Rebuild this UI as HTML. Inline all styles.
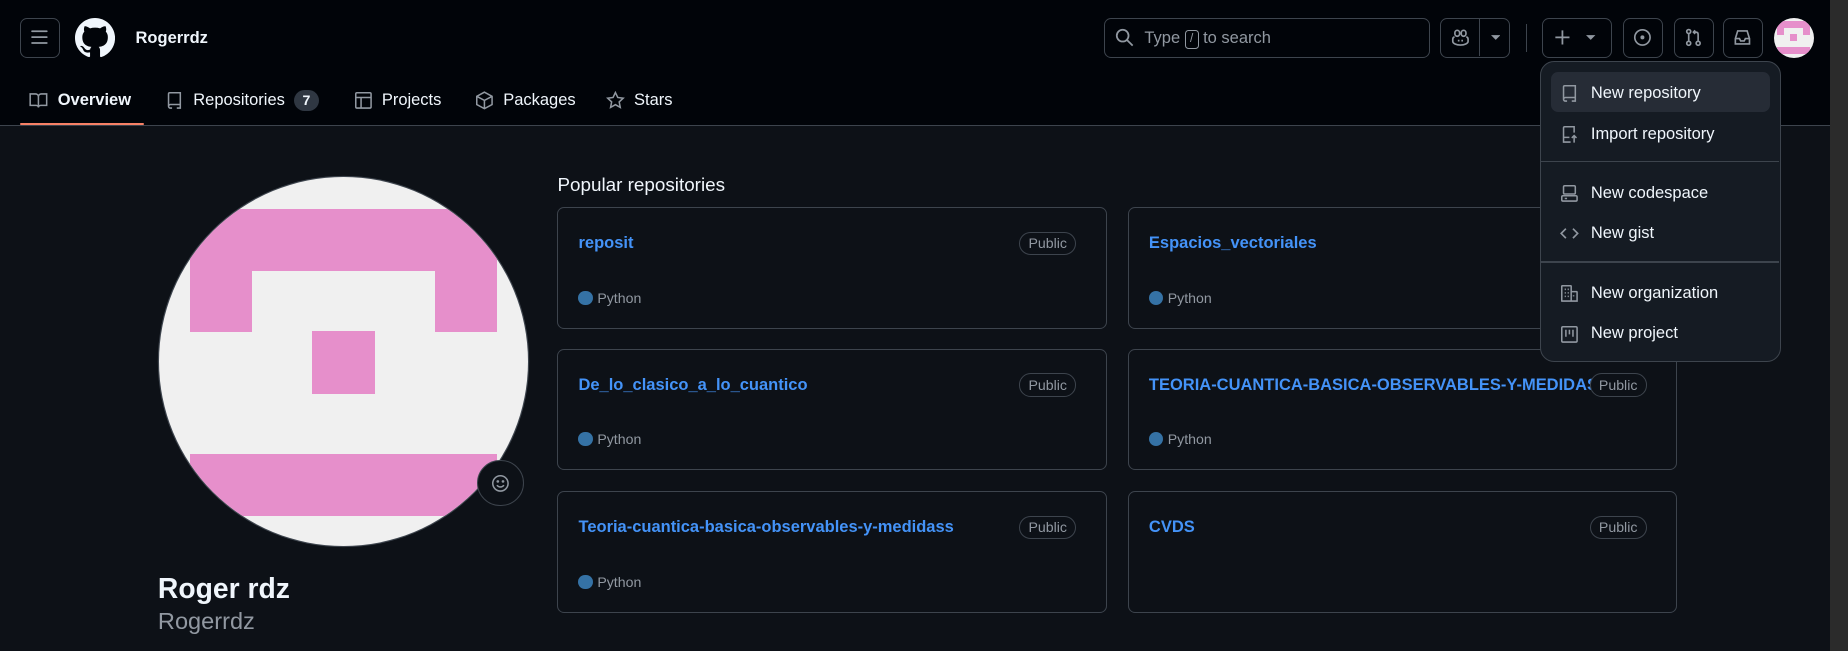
<!DOCTYPE html>
<html><head><meta charset="utf-8"><style>
html,body{margin:0;padding:0;}
body{width:1568px;height:552px;zoom:1.17857;background:#0d1117;font-family:"Liberation Sans",sans-serif;color:#f0f6fc;position:relative;overflow:hidden;}
.a{position:absolute;}
.hdr{left:0;top:0;width:1553px;height:106px;background:#010409;border-bottom:1px solid #3d444d;}
.btn{position:absolute;border:1px solid #3d444d;border-radius:6px;box-sizing:border-box;}
svg{display:block}
.tab{position:absolute;top:75px;height:20px;font-size:14px;color:#f0f6fc;display:flex;align-items:center;gap:8px;}
.card{position:absolute;width:466px;height:103px;border:1px solid #3d444d;border-radius:6px;box-sizing:border-box;}
.rn{position:absolute;left:17px;top:22px;font-size:14px;font-weight:bold;color:#4493f8;}
.pub{position:absolute;right:25px;top:20px;border:1px solid #3d444d;border-radius:10px;font-size:12px;color:#9198a1;padding:2px 7px;line-height:14px;}
.lang{position:absolute;left:17px;top:69px;font-size:12px;color:#9198a1;display:flex;align-items:center;gap:4px;}
.dot{width:12px;height:12px;border-radius:50%;background:#3572a5;}
.menu{left:1307px;top:52px;width:204px;height:255px;background:#151b23;border:1px solid #3d444d;border-radius:12px;box-sizing:border-box;}
.mi{position:absolute;left:8px;width:186px;height:34px;display:flex;align-items:center;font-size:14px;color:#f0f6fc;border-radius:6px;padding-top:3px;box-sizing:border-box;}
.mi svg{margin-left:8px;margin-right:10px}
.div{position:absolute;left:0;width:202px;height:1px;background:#3d444d;}
</style></head><body>
<div class="a hdr"></div>
<div class="a" style="left:1553px;top:0;width:15px;height:552px;background:#2b2b2b"></div>
<div class="btn" style="left:17px;top:15px;width:34px;height:34px;"><svg style="margin:8px" width="16" height="16" viewBox="0 0 16 16" fill="#9198a1"><path d="M1 2.75A.75.75 0 0 1 1.75 2h12.5a.75.75 0 0 1 0 1.5H1.75A.75.75 0 0 1 1 2.75Zm0 5A.75.75 0 0 1 1.75 7h12.5a.75.75 0 0 1 0 1.5H1.75A.75.75 0 0 1 1 7.75ZM1.75 12h12.5a.75.75 0 0 1 0 1.5H1.75a.75.75 0 0 1 0-1.5Z"/></svg></div>
<svg class="a" style="left:64px;top:15px" width="34" height="34" viewBox="0 0 16 16" fill="#f0f6fc"><path d="M8 0C3.58 0 0 3.58 0 8c0 3.540 2.29 6.53 5.47 7.59.4.07.55-.17.55-.38 0-.19-.01-.82-.01-1.49-2.01.37-2.530-.49-2.69-.94-.09-.23-.48-.94-.82-1.13-.28-.15-.68-.52-.01-.53.63-.01 1.08.58 1.23.82.72 1.21 1.87.87 2.33.66.07-.52.28-.87.51-1.070-1.78-.2-3.64-.89-3.640-3.95 0-.87.31-1.59.82-2.15-.08-.2-.36-1.02.08-2.12 0 0 .67-.21 2.2.82.64-.18 1.32-.27 2-.27.68 0 1.36.09 2 .27 1.53-1.04 2.2-.82 2.2-.82.44 1.1.16 1.92.08 2.12.51.56.82 1.27.82 2.15 0 3.07-1.870 3.75-3.65 3.95.29.25.54.73.54 1.48 0 1.07-.01 1.93-.01 2.2 0 .21.15.46.55.38A8.013 8.013 0 0 0 16 8c0-4.42-3.58-8-8-8z"/></svg>
<div class="a" style="left:115px;top:25px;font-size:14px;font-weight:bold">Rogerrdz</div>

<div class="btn" style="left:937px;top:15px;width:276px;height:34px;"></div>
<svg class="a" style="left:946px;top:24px" width="16" height="16" viewBox="0 0 16 16" fill="none" stroke="#9198a1" stroke-width="1.5"><circle cx="6.5" cy="6.5" r="5"/><path d="M10.3 10.3 15 15"/></svg>
<div class="a" style="left:971px;top:25px;font-size:14px;color:#9198a1">Type <span style="display:inline-block;border:1px solid #9198a1;border-radius:3px;font-size:10px;width:10px;height:14px;text-align:center;line-height:14px;vertical-align:1px">/</span> to search</div>
<div class="btn" style="left:1222px;top:15px;width:59px;height:34px;"><div class="a" style="left:32px;top:0;width:1px;height:32px;background:#3d444d"></div></div>
<svg class="a" style="left:1231px;top:24px" width="16" height="16" viewBox="0 0 16 16" fill="none" stroke="#9198a1" stroke-width="1.4"><path d="M3 7.5c-1 .3-1.5 1-1.5 2v2c0 1.5 3 3 6.5 3s6.5-1.5 6.5-3v-2c0-1-.5-1.7-1.5-2"/><rect x="3.3" y="2" width="4" height="5" rx="2"/><rect x="8.7" y="2" width="4" height="5" rx="2"/><path d="M6.5 10v1.5M9.5 10v1.5"/></svg>
<svg class="a" style="left:1265px;top:29px" width="8" height="6" viewBox="0 0 8 6" fill="#9198a1"><path d="M0 1h8L4 5z"/></svg>
<div class="a" style="left:1295px;top:20px;width:1px;height:24px;background:#3d444d"></div>
<div class="btn" style="left:1308px;top:15px;width:60px;height:34px;"></div>
<svg class="a" style="left:1318px;top:24px" width="16" height="16" viewBox="0 0 16 16" stroke="#9198a1" stroke-width="1.5"><path d="M8 2v12M2 8h12"/></svg>
<svg class="a" style="left:1346px;top:29px" width="8" height="6" viewBox="0 0 8 6" fill="#9198a1"><path d="M0 1h8L4 5z"/></svg>
<div class="btn" style="left:1377px;top:15px;width:34px;height:34px;"><svg style="margin:8px" width="16" height="16" viewBox="0 0 16 16" fill="none" stroke="#9198a1" stroke-width="1.4"><circle cx="8" cy="8" r="6.5"/><circle cx="8" cy="8" r="1" fill="#9198a1"/></svg></div>
<div class="btn" style="left:1420px;top:15px;width:34px;height:34px;"><svg style="margin:8px" width="16" height="16" viewBox="0 0 16 16" fill="none" stroke="#9198a1" stroke-width="1.4"><circle cx="4" cy="3" r="1.7"/><circle cx="4" cy="13" r="1.7"/><circle cx="12" cy="13" r="1.7"/><path d="M4 5v6M12 11V5.5c0-1-.5-2-2-2H8M9.5 2 8 3.5 9.5 5"/></svg></div>
<div class="btn" style="left:1462px;top:15px;width:34px;height:34px;"><svg style="margin:8px" width="16" height="16" viewBox="0 0 16 16" fill="none" stroke="#9198a1" stroke-width="1.4"><path d="M2 9l2-6.5h8L14 9v4.5H2z M2 9h3.5l1 2h3l1-2H14"/></svg></div>
<div class="a" style="left:1505px;top:15px;width:34px;height:34px;border-radius:50%;background:#f0f0f0;overflow:hidden">
<div class="a" style="left:3px;top:3px;width:28px;height:6px;background:#e68fcb"></div>
<div class="a" style="left:3px;top:9px;width:6px;height:6px;background:#e68fcb"></div>
<div class="a" style="left:25px;top:9px;width:6px;height:6px;background:#e68fcb"></div>
<div class="a" style="left:14px;top:14px;width:6px;height:6px;background:#e68fcb"></div>
<div class="a" style="left:3px;top:25px;width:28px;height:6px;background:#e68fcb"></div></div>

<div class="tab" style="left:25px"><svg width="16" height="16" viewBox="0 0 16 16" fill="none" stroke="#9198a1" stroke-width="1.3"><path d="M1 2.5h4.5C7 2.5 8 3.5 8 5v9c0-1-.8-1.8-2-1.8H1zM15 2.5h-4.5C9 2.5 8 3.5 8 5v9c0-1 .8-1.8 2-1.8h5z"/></svg><b>Overview</b></div>
<div class="a" style="left:17px;top:104px;width:105px;height:2px;background:#f78166;border-radius:2px"></div>
<div class="tab" style="left:140px"><svg width="16" height="16" viewBox="0 0 16 16" fill="none" stroke="#9198a1" stroke-width="1.3"><path d="M3 13V2.5c0-.6.4-1 1-1h9v10H4.5C3.7 11.5 3 12.2 3 13s.7 1.5 1.5 1.5H6M10 14.5h3v-3"/></svg>Repositories <span style="background:#2f3742;border-radius:10px;font-size:12px;font-weight:bold;padding:0 7px;line-height:18px">7</span></div>
<div class="tab" style="left:300px"><svg width="16" height="16" viewBox="0 0 16 16" fill="none" stroke="#9198a1" stroke-width="1.3"><rect x="1.5" y="1.5" width="13" height="13" rx="1"/><path d="M1.5 5.5h13M6 5.5v9"/></svg>Projects</div>
<div class="tab" style="left:403px"><svg width="16" height="16" viewBox="0 0 16 16" fill="none" stroke="#9198a1" stroke-width="1.3"><path d="M8 1 14.5 4.5v7L8 15 1.5 11.5v-7zM1.5 4.5 8 8l6.5-3.5M8 8v7"/></svg>Packages</div>
<div class="tab" style="left:514px"><svg width="16" height="16" viewBox="0 0 16 16" fill="none" stroke="#9198a1" stroke-width="1.3"><path d="M8 1.3l2 4.2 4.6.6-3.4 3.2.9 4.6L8 11.6l-4.1 2.3.9-4.6L1.4 6.1 6 5.5z"/></svg>Stars</div>

<div class="a" style="left:135px;top:150px;width:313px;height:313px;border-radius:50%;background:#f0f0f0;overflow:hidden;box-shadow:0 0 0 1px #3d444d">
<div class="a" style="left:26px;top:27px;width:261px;height:53px;background:#e68fcb"></div>
<div class="a" style="left:26px;top:80px;width:53px;height:52px;background:#e68fcb"></div>
<div class="a" style="left:234px;top:80px;width:53px;height:52px;background:#e68fcb"></div>
<div class="a" style="left:130px;top:131px;width:53px;height:53px;background:#e68fcb"></div>
<div class="a" style="left:26px;top:235px;width:261px;height:53px;background:#e68fcb"></div></div>
<div class="a" style="left:405px;top:390px;width:38px;height:38px;border-radius:50%;background:#0d1117;border:1px solid #3d444d"><svg style="margin:11px" width="16" height="16" viewBox="0 0 16 16" fill="none" stroke="#9198a1" stroke-width="1.3"><circle cx="8" cy="8" r="6.5"/><path d="M5 9.5c1.5 2 4.5 2 6 0"/><circle cx="5.8" cy="6.3" r=".5" fill="#9198a1"/><circle cx="10.2" cy="6.3" r=".5" fill="#9198a1"/></svg></div>
<div class="a" style="left:134px;top:485px;font-size:24px;font-weight:bold">Roger rdz</div>
<div class="a" style="left:134px;top:516px;font-size:20px;color:#9198a1;font-weight:300">Rogerrdz</div>

<div class="a" style="left:473px;top:148px;font-size:16px">Popular repositories</div>
<div class="card" style="left:473px;top:176px"><div class="rn">reposit</div><div class="pub">Public</div><div class="lang"><span class="dot"></span>Python</div></div>
<div class="card" style="left:957px;top:176px"><div class="rn">Espacios_vectoriales</div><div class="pub">Public</div><div class="lang"><span class="dot"></span>Python</div></div>
<div class="card" style="left:473px;top:296px"><div class="rn">De_lo_clasico_a_lo_cuantico</div><div class="pub">Public</div><div class="lang"><span class="dot"></span>Python</div></div>
<div class="card" style="left:957px;top:296px"><div class="rn">TEORIA-CUANTICA-BASICA-OBSERVABLES-Y-MEDIDAS</div><div class="pub" style="background:#0d1117">Public</div><div class="lang"><span class="dot"></span>Python</div></div>
<div class="card" style="left:473px;top:417px"><div class="rn">Teoria-cuantica-basica-observables-y-medidass</div><div class="pub">Public</div><div class="lang"><span class="dot"></span>Python</div></div>
<div class="card" style="left:957px;top:417px"><div class="rn">CVDS</div><div class="pub">Public</div></div>

<div class="a menu">
<div class="mi" style="top:8px;background:#262c36"><svg width="16" height="16" viewBox="0 0 16 16" fill="none" stroke="#9198a1" stroke-width="1.3"><path d="M3 13V2.5c0-.6.4-1 1-1h9v10H4.5C3.7 11.5 3 12.2 3 13s.7 1.5 1.5 1.5H6M10 14.5h3v-3"/></svg>New repository</div>
<div class="mi" style="top:43px"><svg width="16" height="16" viewBox="0 0 16 16" fill="none" stroke="#9198a1" stroke-width="1.3"><path d="M9 14.5H3V2.5c0-.6.4-1 1-1h8v5M3 10.5h5M12 15V9M10 11l2-2 2 2"/></svg>Import repository</div>
<div class="div" style="top:84px"></div>
<div class="mi" style="top:93px"><svg width="16" height="16" viewBox="0 0 16 16" fill="none" stroke="#9198a1" stroke-width="1.3"><rect x="3" y="1.5" width="10" height="7" rx="1"/><rect x="1.5" y="10" width="13" height="4.5" rx="1"/><path d="M4 12.3h2"/></svg>New codespace</div>
<div class="mi" style="top:127px"><svg width="16" height="16" viewBox="0 0 16 16" fill="none" stroke="#9198a1" stroke-width="1.4"><path d="M5 4 1 8l4 4M11 4l4 4-4 4"/></svg>New gist</div>
<div class="div" style="top:169px"></div>
<div class="mi" style="top:178px"><svg width="16" height="16" viewBox="0 0 16 16" fill="none" stroke="#9198a1" stroke-width="1.3"><path d="M1.5 14.5V2c0-.3.2-.5.5-.5h7c.3 0 .5.2.5.5v12.5M9.5 6.5h4.5c.3 0 .5.2.5.5v7.5H1M4 4.5h1M6.5 4.5h1M4 7.5h1M6.5 7.5h1M4 10.5h1M6.5 10.5h1M11.5 9.5v1"/></svg>New organization</div>
<div class="mi" style="top:212px"><svg width="16" height="16" viewBox="0 0 16 16" fill="none" stroke="#9198a1" stroke-width="1.3"><rect x="1.5" y="1.5" width="13" height="13" rx="1"/><path d="M5 4v6M8 4v4M11 4v6"/></svg>New project</div>
</div>
</body></html>
